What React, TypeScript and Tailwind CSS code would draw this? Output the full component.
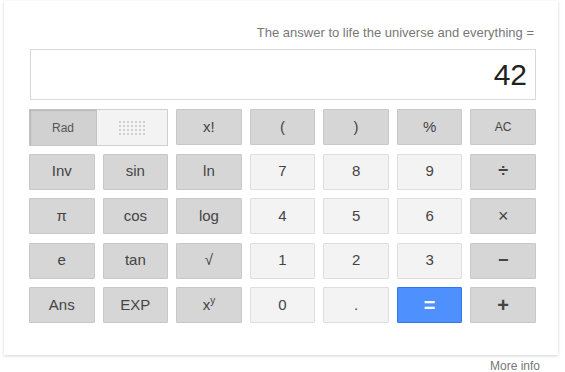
import React from "react";

type Key = { label: React.ReactNode; kind: "dark" | "light" | "blue"; size?: string; weight?: string };

const keys: Key[] = [
  { label: "x!", kind: "dark" },
  { label: "(", kind: "dark" },
  { label: ")", kind: "dark" },
  { label: "%", kind: "dark" },
  { label: "AC", kind: "dark", size: "text-[12px]" },
  { label: "Inv", kind: "dark" },
  { label: "sin", kind: "dark" },
  { label: "ln", kind: "dark" },
  { label: "7", kind: "light" },
  { label: "8", kind: "light" },
  { label: "9", kind: "light" },
  { label: "÷", kind: "dark", size: "text-[18px]", weight: "font-bold" },
  { label: "π", kind: "dark" },
  { label: "cos", kind: "dark" },
  { label: "log", kind: "dark" },
  { label: "4", kind: "light" },
  { label: "5", kind: "light" },
  { label: "6", kind: "light" },
  { label: "×", kind: "dark", size: "text-[18px]" },
  { label: "e", kind: "dark" },
  { label: "tan", kind: "dark" },
  { label: "√", kind: "dark" },
  { label: "1", kind: "light" },
  { label: "2", kind: "light" },
  { label: "3", kind: "light" },
  { label: "−", kind: "dark", size: "text-[18px]", weight: "font-bold" },
  { label: "Ans", kind: "dark" },
  { label: "EXP", kind: "dark" },
  {
    label: (
      <span>
        x<span className="text-[10px] relative -top-[6px]">y</span>
      </span>
    ),
    kind: "dark",
  },
  { label: "0", kind: "light" },
  { label: ".", kind: "light" },
  { label: "=", kind: "blue", size: "text-[20px]", weight: "font-bold" },
  { label: "+", kind: "dark", size: "text-[20px]", weight: "font-bold" },
];

const kindCls = {
  dark: "bg-[#d6d6d6] border-[#c8c8c8] text-[#444]",
  light: "bg-[#f3f3f3] border-[#dedede] text-[#444]",
  blue: "bg-[#4d90fe] border-[#3079ed] text-white",
};

function Dots() {
  const dots = [];
  for (let r = 0; r < 4; r++)
    for (let c = 0; c < 7; c++)
      dots.push(<rect key={`${r}-${c}`} x={c * 4} y={r * 4} width="2" height="2" fill="#cfcfcf" />);
  return (
    <svg width="26" height="14" viewBox="0 0 26 14">
      {dots}
    </svg>
  );
}

export default function App() {
  return (
    <div className="w-[565px] h-[372px] bg-white font-['Liberation_Sans',Arial,sans-serif]">
      <div className="ml-[4px] mt-[1px] w-[554px] h-[354px] bg-white shadow-[0_1px_3px_rgba(0,0,0,0.18)] pl-[25px] pt-[24px]">
        <div className="w-[507px] text-right text-[13px] leading-[16px] text-[#777] pr-[2px]">
          The answer to life the universe and everything =
        </div>
        <div className="mt-[8px] ml-[1px] w-[506px] h-[51px] border border-[#d9d9d9] flex items-center justify-end pr-[8px] text-[30px] text-[#222]">
          42
        </div>
        <div className="mt-[9px] w-[507px] grid grid-cols-7 grid-rows-[repeat(5,36px)] gap-x-[8px] gap-y-[8.5px]">
          <div className="col-span-2 flex h-[37px]">
            <div className="w-[68px] bg-[#d1d1d1] border border-[#c4c4c4] shadow-[inset_1px_1px_1px_rgba(0,0,0,0.12)] flex items-center justify-center text-[12px] text-[#555]">
              Rad
            </div>
            <div className="flex-1 bg-[#f3f3f3] border border-[#d0d0d0] border-l-0 flex items-center justify-center">
              <Dots />
            </div>
          </div>
          {keys.map((k, i) => (
            <div
              key={i}
              className={`border rounded-[1px] flex items-center justify-center ${kindCls[k.kind]} ${k.size ?? "text-[15px]"} ${k.weight ?? ""}`}
            >
              {k.label}
            </div>
          ))}
        </div>
      </div>
      <div className="w-[540px] text-right text-[12px] leading-[12px] mt-[5px] text-[#777]">More info</div>
    </div>
  );
}
